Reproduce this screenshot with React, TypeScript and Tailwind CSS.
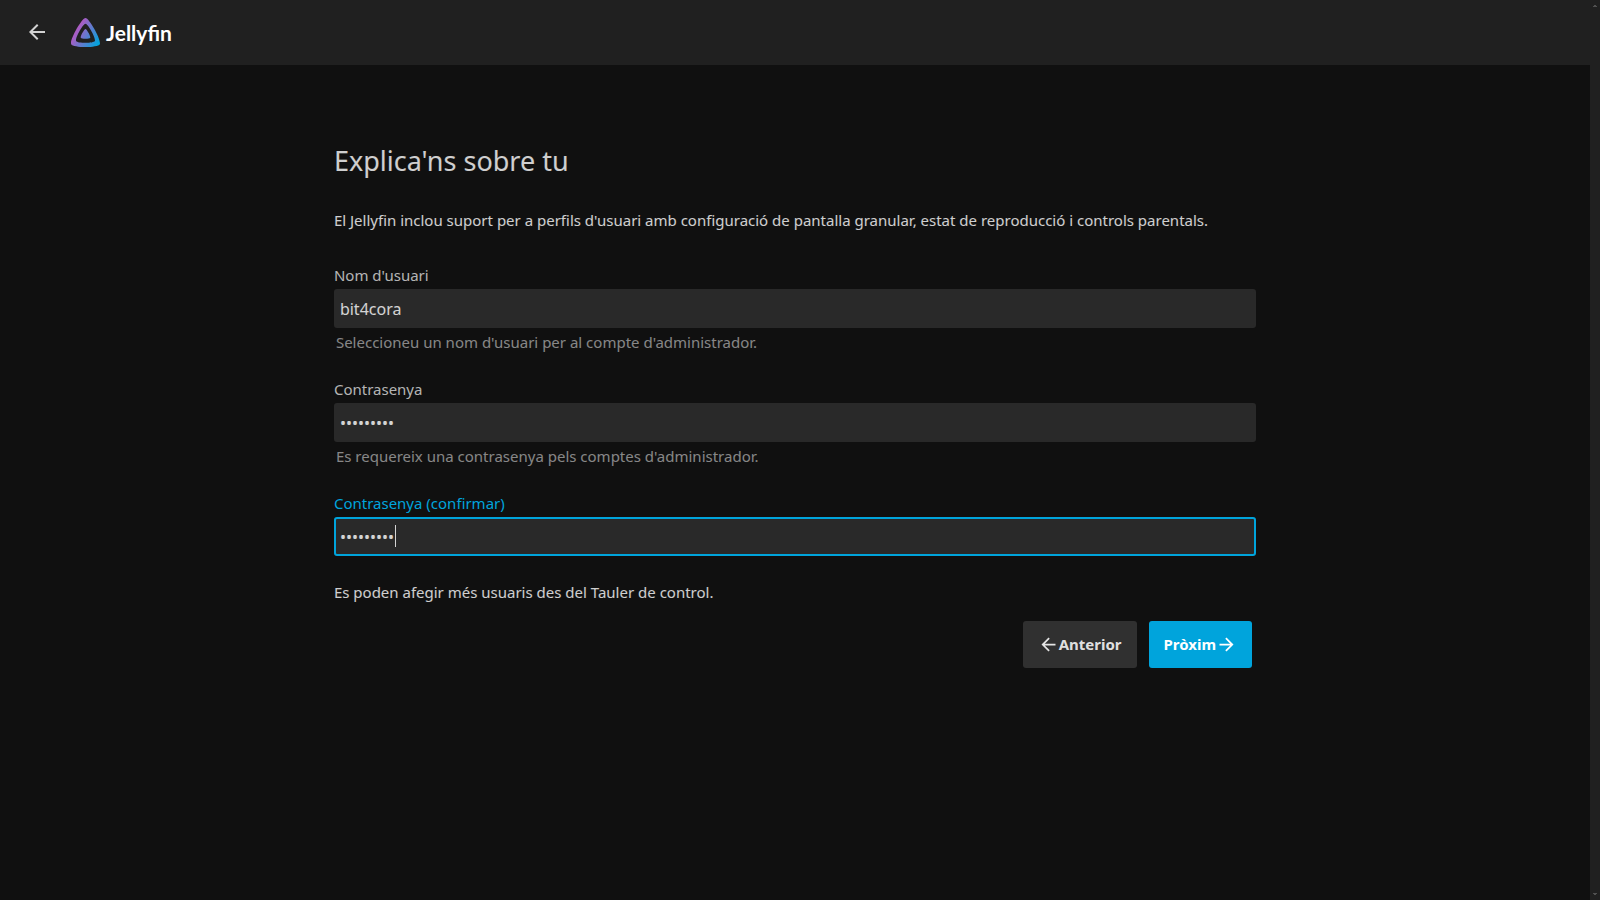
import { useId } from "react";

function ArrowBack({ className }: { className: string }) {
  return (
    <svg viewBox="0 0 24 24" fill="currentColor" className={className} aria-hidden="true">
      <path d="M20 11H7.83l5.59-5.59L12 4l-8 8 8 8 1.41-1.41L7.83 13H20v-2z" />
    </svg>
  );
}

function ArrowForward({ className }: { className: string }) {
  return (
    <svg viewBox="0 0 24 24" fill="currentColor" className={className} aria-hidden="true">
      <path d="M12 4l-1.41 1.41L16.17 11H4v2h12.17l-5.58 5.59L12 20l8-8z" />
    </svg>
  );
}

function Logo() {
  return (
    <a href="#" className="flex items-center gap-1.5 text-white">
      <svg viewBox="0 0 24 24" className="size-[29px]" aria-hidden="true">
        <defs>
          <linearGradient id="mark" x1="5.17" y1="10" x2="23.26" y2="20.44" gradientUnits="userSpaceOnUse">
            <stop offset="0" stopColor="#aa5cc3" />
            <stop offset="1" stopColor="#00a4dc" />
          </linearGradient>
        </defs>
        <path
          fill="url(#mark)"
          d="M12 .002C8.826.002-1.398 18.537.16 21.666c1.56 3.129 22.14 3.094 23.682 0C25.384 18.573 15.177 0 12 0zm7.76 18.949c-1.008 2.028-14.493 2.05-15.514 0C3.224 16.9 9.92 4.755 12.003 4.755c2.081 0 8.77 12.166 7.759 14.196zM12 9.198c-1.054 0-4.446 6.15-3.93 7.189.518 1.04 7.348 1.027 7.86 0 .511-1.027-2.874-7.19-3.93-7.19z"
        />
      </svg>
      <span className="font-['Lato',sans-serif] text-[21px] leading-7 font-bold">Jellyfin</span>
    </a>
  );
}

type FieldProps = {
  label: string;
  type: string;
  value: string;
  help?: string;
  active?: boolean;
};

function Field({ label, type, value, help, active = false }: FieldProps) {
  const id = useId();
  return (
    <div className="flex flex-col gap-1">
      <label htmlFor={id} className={active ? "leading-5 text-[#00a4dc]" : "leading-5 text-white/70"}>
        {label}
      </label>
      <div className="relative">
        <input
          id={id}
          type={type}
          defaultValue={value}
          autoFocus={active}
          className={
            active
              ? "block h-[39px] w-full rounded-[3px] border-2 border-[#00a4dc] bg-[#292929] px-1 text-base text-white/80 caret-transparent outline-none"
              : "block h-[39px] w-full rounded-[3px] border-2 border-[#292929] bg-[#292929] px-1 text-base text-white/80 outline-none focus:border-[#00a4dc]"
          }
        />
        {active && <span className="pointer-events-none absolute top-2 left-[61px] h-[22px] w-px bg-white/80" />}
      </div>
      {help && <p className="pl-0.5 leading-5 text-white/50">{help}</p>}
    </div>
  );
}

export default function App() {
  return (
    <div className="flex min-h-screen bg-[#101010] font-['Noto_Sans',sans-serif] text-[15px] text-white/80">
      <div className="flex flex-1 flex-col">
        <header className="flex h-[65px] items-center gap-[22px] bg-[#202020] pl-[25px]">
          <button type="button" aria-label="Enrere" className="pb-0.5">
            <ArrowBack className="size-6" />
          </button>
          <Logo />
        </header>
        <main className="mx-auto w-[58%] pt-[76px]">
          <h1 className="text-[27px] leading-10">Explica'ns sobre tu</h1>
          <p className="mt-[29px] leading-5">
            El Jellyfin inclou suport per a perfils d'usuari amb configuració de pantalla granular, estat de
            reproducció i controls parentals.
          </p>
          <form className="mt-[35px]">
            <div className="flex flex-col gap-[27px]">
              <Field
                label="Nom d'usuari"
                type="text"
                value="bit4cora"
                help="Seleccioneu un nom d'usuari per al compte d'administrador."
              />
              <Field
                label="Contrasenya"
                type="password"
                value="bit4cora1"
                help="Es requereix una contrasenya pels comptes d'administrador."
              />
              <Field label="Contrasenya (confirmar)" type="password" value="bit4cora1" active />
            </div>
            <p className="mt-[26px] leading-5">Es poden afegir més usuaris des del Tauler de control.</p>
            <div className="mt-[19px] flex justify-end gap-3 pr-1">
              <button
                type="button"
                className="flex h-[47px] items-center rounded-[3px] bg-[#303030] px-[15px] font-bold text-white/87"
              >
                <ArrowBack className="size-[21px]" />
                Anterior
              </button>
              <button
                type="button"
                className="flex h-[47px] items-center rounded-[3px] bg-[#00a4dc] px-[15px] font-bold text-white"
              >
                Pròxim
                <ArrowForward className="size-[21px]" />
              </button>
            </div>
          </form>
        </main>
      </div>
      <div className="flex w-2.5 flex-col items-center justify-between bg-[#202020] py-[5px]" aria-hidden="true">
        <svg viewBox="0 0 4 2" className="h-0.5 w-1" fill="#505050">
          <path d="M1 0h2v1h1v1H0V1h1z" />
        </svg>
        <svg viewBox="0 0 4 2" className="h-0.5 w-1" fill="#505050">
          <path d="M0 0h4v1H3v1H1V1H0z" />
        </svg>
      </div>
    </div>
  );
}
